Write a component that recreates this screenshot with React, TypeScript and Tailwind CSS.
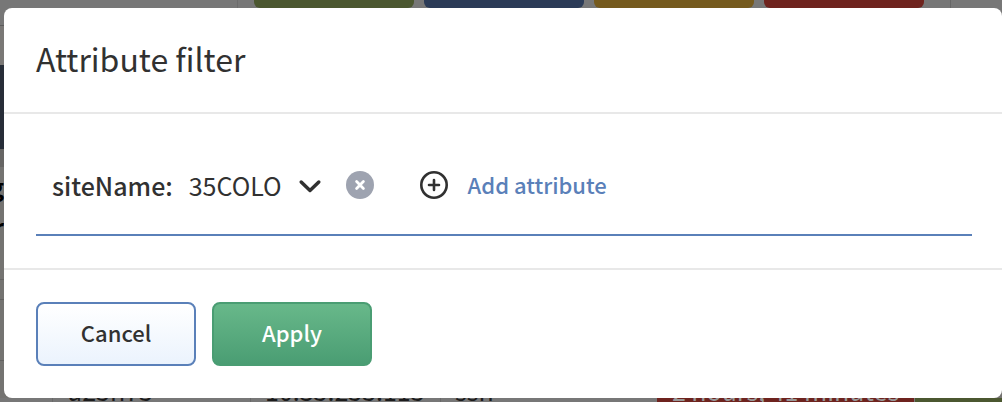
import { useState } from "react";

const statuses = [
  { label: "Healthy", color: "bg-[#4b5730]" },
  { label: "Information", color: "bg-[#2b3b57]" },
  { label: "Warning", color: "bg-[#755a1e]" },
  { label: "Critical", color: "bg-[#6e231e]" },
];

function Backdrop() {
  return (
    <div
      aria-hidden="true"
      className="col-start-1 row-start-1 flex h-screen min-w-0 flex-col justify-between overflow-hidden bg-[#777777]"
    >
      <div className="flex h-2 gap-[10px] pl-[237px]">
        <div className="-mr-[10px] w-[17px] border-l border-[#6c6c6c]" />
        {statuses.map((s) => (
          <div key={s.label} className={`w-40 rounded-b-md ${s.color}`} />
        ))}
        <div className="ml-4 flex-1 border-l border-[#666666]" />
      </div>
      <div className="flex flex-1 flex-col">
        <div className="mt-[17px] h-[40px] border-t border-[#5c5c5c] bg-[#7a7876]" />
        <div className="h-[84px] bg-[#272d38]" />
        <div className="h-[18px] bg-[#666564]" />
        <div className="flex-1 overflow-hidden bg-[#747371]">
          <div className="flex w-1 flex-col items-end text-2xl/10 font-bold text-black">
            <span>g</span>
            <span>r</span>
          </div>
          <div className="mt-8 h-5 border-t border-[#656463]" />
          <div className="h-[62px] border-y border-[#626160]" />
        </div>
      </div>
      <div className="flex h-1 items-start text-[25px]/6 text-[#1c1c1c]">
        <div className="h-1 w-[53px] border-r border-[#696969]" />
        <div className="h-1 w-[198px] border-r border-[#696969]">
          <div className="-mt-5 pl-[14px]">u25h75</div>
        </div>
        <div className="h-1 w-[190px] border-r border-[#696969]">
          <div className="-mt-5 pl-[14px]">10.35.255.115</div>
        </div>
        <div className="h-1 w-[216px]">
          <div className="-mt-5 pl-[14px]">ssh</div>
        </div>
        <div className="h-1 w-[257px] bg-[#6e231e] text-center text-[#999999]">
          <div className="-mt-5">2 hours, 41 minutes</div>
        </div>
        <div className="h-1 flex-1 border-l border-[#777777] bg-[#4b5730]" />
      </div>
    </div>
  );
}

export default function App() {
  const [hasFilter, setHasFilter] = useState(true);

  return (
    <div className="grid min-h-screen grid-cols-1 font-['Noto_Sans_CJK_SC','Noto_Sans',sans-serif] text-[#313131]">
      <Backdrop />
      <main
        role="dialog"
        aria-labelledby="dialog-title"
        className="z-10 col-start-1 row-start-1 mt-2 mb-1 ml-1 flex flex-col rounded-lg bg-white"
      >
        <header className="border-b-2 border-[#e8e8e8] px-8 pt-[30px] pb-[34px]">
          <h1 id="dialog-title" className="text-[32px]/10">
            Attribute filter
          </h1>
        </header>
        <section className="py-8 pr-[30px] pl-8">
          <div className="flex h-[90px] items-center border-b-2 border-[#5a80b9] px-4 pb-[10px]">
            {hasFilter && (
              <div className="mr-[46px] flex items-center">
                <button type="button" className="flex items-center gap-4" aria-haspopup="listbox">
                  <span className="text-[25px]/8 font-medium">siteName:</span>
                  <span className="text-[25px]/8">35COLO</span>
                  <svg className="size-6" viewBox="0 0 24 24" fill="none" stroke="currentColor" strokeWidth="3.5" strokeLinecap="round" strokeLinejoin="round">
                    <path d="M3.2 9 12 17.4 20.8 9" />
                  </svg>
                </button>
                <button
                  type="button"
                  aria-label="Remove siteName"
                  className="ml-6"
                  onClick={() => setHasFilter(false)}
                >
                  <svg className="size-7" viewBox="0 0 28 28" fill="none">
                    <circle cx="14" cy="14" r="14" fill="#9ea3b0" />
                    <path d="m10.6 10.6 6.8 6.8m0-6.8-6.8 6.8" stroke="white" strokeWidth="2.8" strokeLinecap="round" />
                  </svg>
                </button>
              </div>
            )}
            <button
              type="button"
              className="flex items-center gap-5"
              onClick={() => setHasFilter(true)}
            >
              <svg className="size-7" viewBox="0 0 28 28" fill="none" stroke="currentColor" strokeWidth="2.6" strokeLinecap="round">
                <circle cx="14" cy="14" r="12.7" />
                <path d="M14 9v10M9 14h10" />
              </svg>
              <span className="pb-0.5 text-[22px]/8 font-medium text-[#5a80b9]">Add attribute</span>
            </button>
          </div>
        </section>
        <footer className="flex gap-4 border-t-2 border-[#e8e8e8] p-8">
          <button type="button" className="h-16 w-40 rounded-lg border-2 border-[#5a80b9] bg-linear-to-b from-white to-[#ebf3fd] pb-1 text-[22px]/8 font-medium">
            Cancel
          </button>
          <button type="button" className="h-16 w-40 rounded-lg border-2 border-[#4a9d73] bg-linear-to-b from-[#68b88a] to-[#4a9d73] pb-1 text-[22px]/8 font-medium text-white">
            Apply
          </button>
        </footer>
      </main>
    </div>
  );
}
